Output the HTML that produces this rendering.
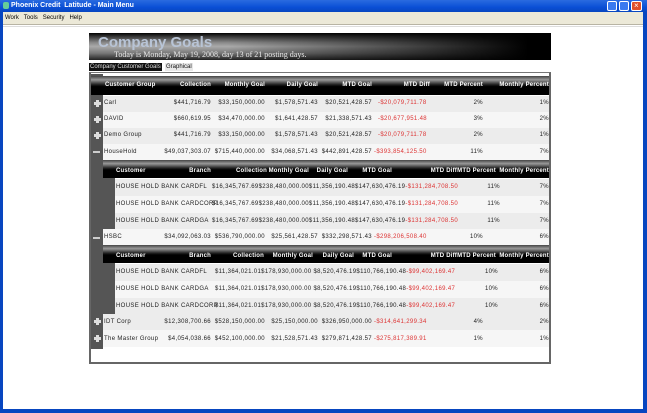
<!DOCTYPE html>
<html><head><style>
*{margin:0;padding:0;box-sizing:border-box}
body{width:647px;height:413px;position:relative;overflow:hidden;background:#fff;font-family:"Liberation Sans",Verdana,sans-serif;font-size:6px;color:#222;letter-spacing:.35px}
.a{position:absolute;white-space:nowrap}
.r{position:absolute;white-space:nowrap;text-align:right;width:90px}
.red{color:#d33}
.hd{color:#fff;font-weight:bold;letter-spacing:.2px}
.row{position:absolute;height:16px}
.ic{position:absolute;width:7px;height:7px}
.ic:before{content:"";position:absolute;left:2px;top:0;width:3px;height:7px;background:#ddd}
.ic:after{content:"";position:absolute;left:0;top:2px;width:7px;height:3px;background:#ddd}
.t{letter-spacing:0}
</style></head><body>
<!-- window frame -->
<div class="a" style="left:0;top:0;width:647px;height:12px;background:linear-gradient(#2a6be0,#0a4fd6 60%,#0846c0)"></div>
<div class="a" style="left:3px;top:2px;width:6px;height:7px;background:#6c9;border-radius:2px"></div>
<div class="a t" style="left:11px;top:2px;color:#fff;font-weight:bold;font-size:7px">Phoenix Credit&nbsp; Latitude - Main Menu</div>
<div class="a" style="left:607px;top:1px;width:10px;height:10px;background:#3a7af0;border:1px solid #fff;border-radius:2px"></div>
<div class="a" style="left:619px;top:1px;width:10px;height:10px;background:#3a7af0;border:1px solid #fff;border-radius:2px"></div>
<div class="a" style="left:631px;top:1px;width:11px;height:10px;background:#e0502a;border:1px solid #fff;border-radius:2px;color:#fff;font-size:8px;line-height:8px;text-align:center">×</div>
<div class="a" style="left:0;top:12px;width:647px;height:13px;background:#ece9d8;border-bottom:1px solid #b8b4a4"></div>
<div class="a t" style="left:5px;top:15px;color:#000">Work&nbsp;&nbsp; Tools&nbsp;&nbsp; Security&nbsp;&nbsp; Help</div>
<div class="a" style="left:0;top:12px;width:3px;height:401px;background:#0846c0"></div>
<div class="a" style="left:643px;top:12px;width:4px;height:401px;background:#0846c0"></div>
<div class="a" style="left:0;top:409px;width:647px;height:4px;background:#0846c0"></div>
<div class="a" style="left:3px;top:26px;width:640px;height:1px;background:#ddd"></div>

<!-- header panel -->
<div class="a" style="left:89px;top:33px;width:462px;height:27px;background:linear-gradient(90deg,rgba(0,0,0,0) 0%,rgba(0,0,0,0) 30%,rgba(0,0,0,.6) 70%,#000 95%),linear-gradient(#000,#333 12%,#888 35%,#aaa 50%,#777 75%,#222)"></div>
<div class="a t" style="left:98px;top:34px;color:#b8c4d6;font-weight:bold;font-size:15px">Company Goals</div>
<div class="a t" style="left:114px;top:50px;color:#e8e8e8;font-family:'Liberation Serif',serif;font-size:8px">Today is Monday, May 19, 2008, day 13 of 21 posting days.</div>
<div class="a t" style="left:89px;top:63px;background:#111;color:#ddd;padding:0 1px;height:8px;line-height:8px">Company Customer Goals</div>
<div class="a t" style="left:165px;top:63px;background:#e8e8e8;color:#111;padding:0 1px;height:8px;line-height:8px">Graphical</div>

<!-- table box -->
<div class="a" style="left:89px;top:72px;width:462px;height:292px;border:2px solid #666;border-top:1px solid #777;background:#fff"></div>
<div class="a" style="left:91px;top:74px;width:12px;height:275px;background:#555"></div>
<div class="a" style="left:91px;top:76px;width:458px;height:19px;background:linear-gradient(#444,#999 20%,#222 45%,#000 55%,#000)"></div>
<div class="a hd" style="left:105px;top:82px">Customer Group</div>
<div class="r hd" style="left:121px;top:82px">Collection</div>
<div class="r hd" style="left:175px;top:82px">Monthly Goal</div>
<div class="r hd" style="left:228px;top:82px">Daily Goal</div>
<div class="r hd" style="left:282px;top:82px">MTD Goal</div>
<div class="r hd" style="left:340px;top:82px">MTD Diff</div>
<div class="r hd" style="left:393px;top:82px">MTD Percent</div>
<div class="r hd" style="left:459px;top:82px">Monthly Percent</div>

<!-- top rows -->
<div class="row" style="left:103px;top:96px;width:446px;background:#ececec"></div>
<div class="row" style="left:103px;top:112px;width:446px;background:#f6f6f6"></div>
<div class="row" style="left:103px;top:128px;width:446px;background:#ececec"></div>
<div class="row" style="left:103px;top:144px;width:446px;background:#f6f6f6"></div>
<div class="ic" style="left:94px;top:100px"></div>
<div class="ic" style="left:94px;top:116px"></div>
<div class="ic" style="left:94px;top:132px"></div>
<div class="a" style="left:93px;top:151px;width:7px;height:2px;background:#ccc"></div>

<div class="a" style="left:104px;top:100px">Carl</div><div class="r" style="left:121px;top:100px">$441,716.79</div><div class="r" style="left:175px;top:100px">$33,150,000.00</div><div class="r" style="left:228px;top:100px">$1,578,571.43</div><div class="r" style="left:282px;top:100px">$20,521,428.57</div><div class="a red" style="left:378px;top:100px">-$20,079,711.78</div><div class="r" style="left:393px;top:100px">2%</div><div class="r" style="left:459px;top:100px">1%</div>
<div class="a" style="left:104px;top:116px">DAVID</div><div class="r" style="left:121px;top:116px">$660,619.95</div><div class="r" style="left:175px;top:116px">$34,470,000.00</div><div class="r" style="left:228px;top:116px">$1,641,428.57</div><div class="r" style="left:282px;top:116px">$21,338,571.43</div><div class="a red" style="left:378px;top:116px">-$20,677,951.48</div><div class="r" style="left:393px;top:116px">3%</div><div class="r" style="left:459px;top:116px">2%</div>
<div class="a" style="left:104px;top:132px">Demo Group</div><div class="r" style="left:121px;top:132px">$441,716.79</div><div class="r" style="left:175px;top:132px">$33,150,000.00</div><div class="r" style="left:228px;top:132px">$1,578,571.43</div><div class="r" style="left:282px;top:132px">$20,521,428.57</div><div class="a red" style="left:378px;top:132px">-$20,079,711.78</div><div class="r" style="left:393px;top:132px">2%</div><div class="r" style="left:459px;top:132px">1%</div>
<div class="a" style="left:104px;top:149px">HouseHold</div><div class="r" style="left:121px;top:149px">$49,037,303.07</div><div class="r" style="left:175px;top:149px">$715,440,000.00</div><div class="r" style="left:228px;top:149px">$34,068,571.43</div><div class="r" style="left:282px;top:149px">$442,891,428.57</div><div class="a red" style="left:374px;top:149px">-$393,854,125.50</div><div class="r" style="left:393px;top:149px">11%</div><div class="r" style="left:459px;top:149px">7%</div>

<!-- nested 1 -->
<div class="a" style="left:103px;top:160px;width:12px;height:69px;background:#555"></div>
<div class="a" style="left:103px;top:160px;width:446px;height:18px;background:linear-gradient(#444,#999 20%,#222 45%,#000 55%,#000)"></div>
<div class="a hd" style="left:116px;top:168px">Customer</div>
<div class="r hd" style="left:121px;top:168px">Branch</div>
<div class="r hd" style="left:177px;top:168px">Collection</div>
<div class="r hd" style="left:219px;top:168px">Monthly Goal</div>
<div class="r hd" style="left:258px;top:168px">Daily Goal</div>
<div class="r hd" style="left:302px;top:168px">MTD Goal</div>
<div class="r hd" style="left:367px;top:168px">MTD Diff</div>
<div class="r hd" style="left:406px;top:168px">MTD Percent</div>
<div class="r hd" style="left:459px;top:168px">Monthly Percent</div>
<div class="row" style="left:115px;top:179px;width:434px;height:17px;background:#ececec"></div>
<div class="row" style="left:115px;top:196px;width:434px;height:17px;background:#f6f6f6"></div>
<div class="row" style="left:115px;top:213px;width:434px;height:16px;background:#ececec"></div>
<div class="a" style="left:116px;top:184px">HOUSE HOLD BANK CARDFL</div><div class="a" style="left:212px;top:184px">$16,345,767.69$238,480,000.00$11,356,190.48$147,630,476.19<span class="red">-$131,284,708.50</span></div><div class="r" style="left:410px;top:184px">11%</div><div class="r" style="left:459px;top:184px">7%</div>
<div class="a" style="left:116px;top:201px">HOUSE HOLD BANK CARDCORP</div><div class="a" style="left:212px;top:201px">$16,345,767.69$238,480,000.00$11,356,190.48$147,630,476.19<span class="red">-$131,284,708.50</span></div><div class="r" style="left:410px;top:201px">11%</div><div class="r" style="left:459px;top:201px">7%</div>
<div class="a" style="left:116px;top:218px">HOUSE HOLD BANK CARDGA</div><div class="a" style="left:212px;top:218px">$16,345,767.69$238,480,000.00$11,356,190.48$147,630,476.19<span class="red">-$131,284,708.50</span></div><div class="r" style="left:410px;top:218px">11%</div><div class="r" style="left:459px;top:218px">7%</div>

<!-- HSBC -->
<div class="row" style="left:103px;top:229px;width:446px;background:#f6f6f6"></div>
<div class="a" style="left:93px;top:237px;width:7px;height:2px;background:#ccc"></div>
<div class="a" style="left:104px;top:234px">HSBC</div><div class="r" style="left:121px;top:234px">$34,092,063.03</div><div class="r" style="left:175px;top:234px">$536,790,000.00</div><div class="r" style="left:228px;top:234px">$25,561,428.57</div><div class="r" style="left:282px;top:234px">$332,298,571.43</div><div class="a red" style="left:374px;top:234px">-$298,206,508.40</div><div class="r" style="left:393px;top:234px">10%</div><div class="r" style="left:459px;top:234px">6%</div>

<!-- nested 2 -->
<div class="a" style="left:103px;top:245px;width:12px;height:69px;background:#555"></div>
<div class="a" style="left:103px;top:245px;width:446px;height:18px;background:linear-gradient(#444,#999 20%,#222 45%,#000 55%,#000)"></div>
<div class="a hd" style="left:116px;top:253px">Customer</div>
<div class="r hd" style="left:121px;top:253px">Branch</div>
<div class="r hd" style="left:174px;top:253px">Collection</div>
<div class="r hd" style="left:223px;top:253px">Monthly Goal</div>
<div class="r hd" style="left:264px;top:253px">Daily Goal</div>
<div class="r hd" style="left:302px;top:253px">MTD Goal</div>
<div class="r hd" style="left:367px;top:253px">MTD Diff</div>
<div class="r hd" style="left:406px;top:253px">MTD Percent</div>
<div class="r hd" style="left:459px;top:253px">Monthly Percent</div>
<div class="row" style="left:115px;top:264px;width:434px;height:17px;background:#ececec"></div>
<div class="row" style="left:115px;top:281px;width:434px;height:17px;background:#f6f6f6"></div>
<div class="row" style="left:115px;top:298px;width:434px;height:16px;background:#ececec"></div>
<div class="a" style="left:116px;top:269px">HOUSE HOLD BANK CARDFL</div><div class="a" style="left:215px;top:269px">$11,364,021.01$178,930,000.00 $8,520,476.19$110,766,190.48<span class="red">-$99,402,169.47</span></div><div class="r" style="left:408px;top:269px">10%</div><div class="r" style="left:459px;top:269px">6%</div>
<div class="a" style="left:116px;top:286px">HOUSE HOLD BANK CARDGA</div><div class="a" style="left:215px;top:286px">$11,364,021.01$178,930,000.00 $8,520,476.19$110,766,190.48<span class="red">-$99,402,169.47</span></div><div class="r" style="left:408px;top:286px">10%</div><div class="r" style="left:459px;top:286px">6%</div>
<div class="a" style="left:116px;top:303px">HOUSE HOLD BANK CARDCORP</div><div class="a" style="left:215px;top:303px">$11,364,021.01$178,930,000.00 $8,520,476.19$110,766,190.48<span class="red">-$99,402,169.47</span></div><div class="r" style="left:408px;top:303px">10%</div><div class="r" style="left:459px;top:303px">6%</div>

<!-- last rows -->
<div class="row" style="left:103px;top:314px;width:446px;background:#ececec"></div>
<div class="row" style="left:103px;top:330px;width:446px;height:17px;background:#f6f6f6"></div>
<div class="ic" style="left:94px;top:318px"></div>
<div class="ic" style="left:94px;top:335px"></div>
<div class="a" style="left:104px;top:319px">IDT Corp</div><div class="r" style="left:121px;top:319px">$12,308,700.66</div><div class="r" style="left:175px;top:319px">$528,150,000.00</div><div class="r" style="left:228px;top:319px">$25,150,000.00</div><div class="r" style="left:282px;top:319px">$326,950,000.00</div><div class="a red" style="left:374px;top:319px">-$314,641,299.34</div><div class="r" style="left:393px;top:319px">4%</div><div class="r" style="left:459px;top:319px">2%</div>
<div class="a" style="left:104px;top:336px">The Master Group</div><div class="r" style="left:121px;top:336px">$4,054,038.66</div><div class="r" style="left:175px;top:336px">$452,100,000.00</div><div class="r" style="left:228px;top:336px">$21,528,571.43</div><div class="r" style="left:282px;top:336px">$279,871,428.57</div><div class="a red" style="left:374px;top:336px">-$275,817,389.91</div><div class="r" style="left:393px;top:336px">1%</div><div class="r" style="left:459px;top:336px">1%</div>
</body></html>
